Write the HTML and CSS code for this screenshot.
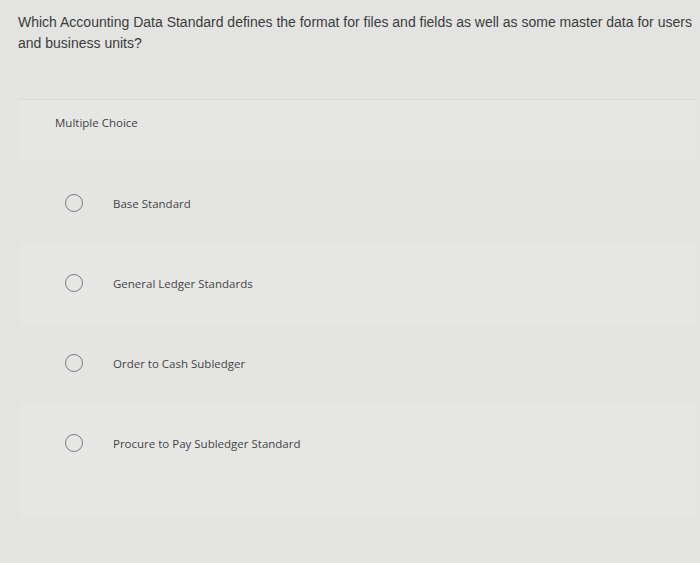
FILE: index.html
```html
<!DOCTYPE html>
<html>
<head>
<meta charset="utf-8">
<link rel="stylesheet" href="styles.css">
</head>
<body>
<div class="question">Which Accounting Data Standard defines the format for files and fields as well as some master data for users and business units?</div>
<div class="card">
  <div class="card-head">Multiple Choice</div>
  <div class="option"><span class="radio"></span><span class="label">Base Standard</span></div>
  <div class="option"><span class="radio"></span><span class="label">General Ledger Standards</span></div>
  <div class="option"><span class="radio"></span><span class="label">Order to Cash Subledger</span></div>
  <div class="option"><span class="radio"></span><span class="label">Procure to Pay Subledger Standard</span></div>
</div>
</body>
</html>
```
FILE: styles.css
```css
html, body {
  margin: 0;
  padding: 0;
}
body {
  width: 700px;
  height: 563px;
  background: #e3e4e2;
  font-family: "Liberation Sans", Arial, sans-serif;
  overflow: hidden;
}
.question {
  padding: 12px 6px 0 18px;
  font-size: 14px;
  line-height: 21px;
  color: #3b3b3b;
  height: 87px;
}
.card {
  margin: 0 4px 0 19px;
  background: #e6e7e5;
  border-top: 1px solid #dadbd9;
  padding-bottom: 35px;
}
.card-head {
  height: 63px;
  padding: 15px 0 0 36px;
  box-sizing: border-box;
  font-family: "Open Sans", sans-serif;
  font-size: 11.5px;
  line-height: 16px;
  color: #3f3f3f;
  border-bottom: 1px solid #e2e3e1;
}
.option {
  height: 80px;
  display: flex;
  align-items: center;
  padding-left: 46px;
  gap: 30px;
}
.option:nth-child(even) {
  background: #e4e5e3;
}
.radio {
  width: 16px;
  height: 16px;
  border: 1.5px solid #7a7a7a;
  border-radius: 50%;
  flex: none;
}
.label {
  font-family: "Open Sans", sans-serif;
  font-size: 11.5px;
  color: #444444;
  font-weight: 500;
}
```
